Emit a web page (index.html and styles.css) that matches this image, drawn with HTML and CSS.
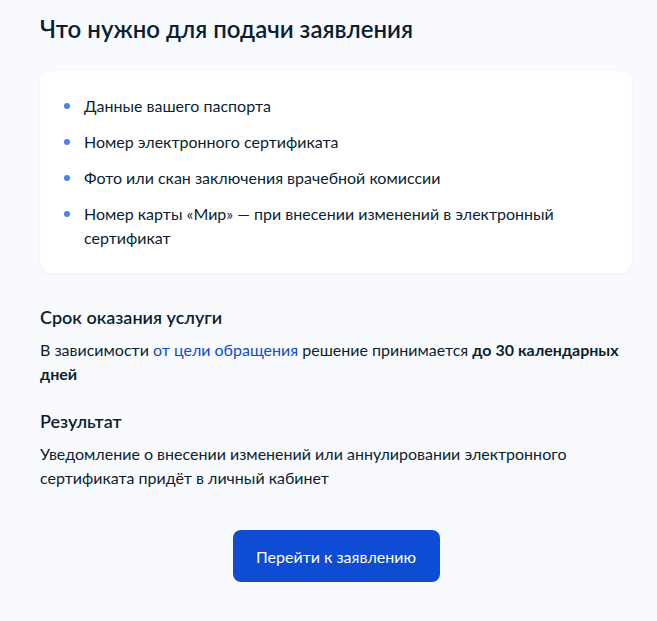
FILE: index.html
```html
<!DOCTYPE html>
<html lang="ru">
<head>
    <meta charset="UTF-8">
    <meta name="viewport" content="width=device-width, initial-scale=1.0">
    <title>Что нужно для подачи заявления</title>
    <link rel="stylesheet" href="styles.css">
</head>
<body>
    <main class="page">
        <h1 class="title">Что нужно для подачи заявления</h1>

        <div class="card">
            <ul class="docs">
                <li>Данные вашего паспорта</li>
                <li>Номер электронного сертификата</li>
                <li>Фото или скан заключения врачебной комиссии</li>
                <li>Номер карты «Мир» — при внесении изменений в электронный сертификат</li>
            </ul>
        </div>

        <section class="info">
            <h2>Срок оказания услуги</h2>
            <p>В зависимости <a href="#">от цели обращения</a> решение принимается <b>до 30 календарных дней</b></p>
        </section>

        <section class="info">
            <h2>Результат</h2>
            <p>Уведомление о внесении изменений или аннулировании электронного сертификата придёт в личный кабинет</p>
        </section>

        <div class="actions">
            <button class="btn">Перейти к заявлению</button>
        </div>
    </main>
</body>
</html>
```
FILE: styles.css
```css
body {
    margin: 0;
    background: #f9fafe;
    font-family: Lato, "Noto Sans", sans-serif;
    color: #0b1f33;
}
.page {
    padding: 13px 25px 38px 40px;
}
.title {
    margin: 0 0 26px 0;
    font-size: 24px;
    line-height: 32px;
    font-weight: 600;
}
.card {
    background: #fff;
    border-radius: 12px;
    padding: 23px 24px 23px 24px;
    box-shadow: 0 1px 4px rgba(150, 170, 210, 0.12);
}
.docs {
    list-style: none;
    margin: 0;
    padding: 0;
    display: flex;
    flex-direction: column;
    gap: 12px;
}
.docs li {
    position: relative;
    padding-left: 20px;
    font-size: 16px;
    line-height: 24px;
}
.docs li::before {
    content: "";
    position: absolute;
    left: 0;
    top: 9px;
    width: 6px;
    height: 6px;
    border-radius: 50%;
    background: #4c7ff0;
}
.info {
    margin-top: 32px;
}
.info + .info {
    margin-top: 23px;
}
.info h2 {
    margin: 0 0 9px 0;
    font-size: 18px;
    line-height: 24px;
    font-weight: 600;
}
.info p {
    margin: 0;
    font-size: 16px;
    line-height: 24px;
}
.info a {
    color: #0d4cd3;
    text-decoration: none;
}
.info b {
    font-weight: 700;
}
.actions {
    display: flex;
    justify-content: center;
    margin-top: 40px;
}
.btn {
    background: #0d4cd3;
    color: #fff;
    border: none;
    border-radius: 8px;
    width: 207px;
    height: 52px;
    font-family: inherit;
    font-size: 16px;
    cursor: pointer;
}
```
